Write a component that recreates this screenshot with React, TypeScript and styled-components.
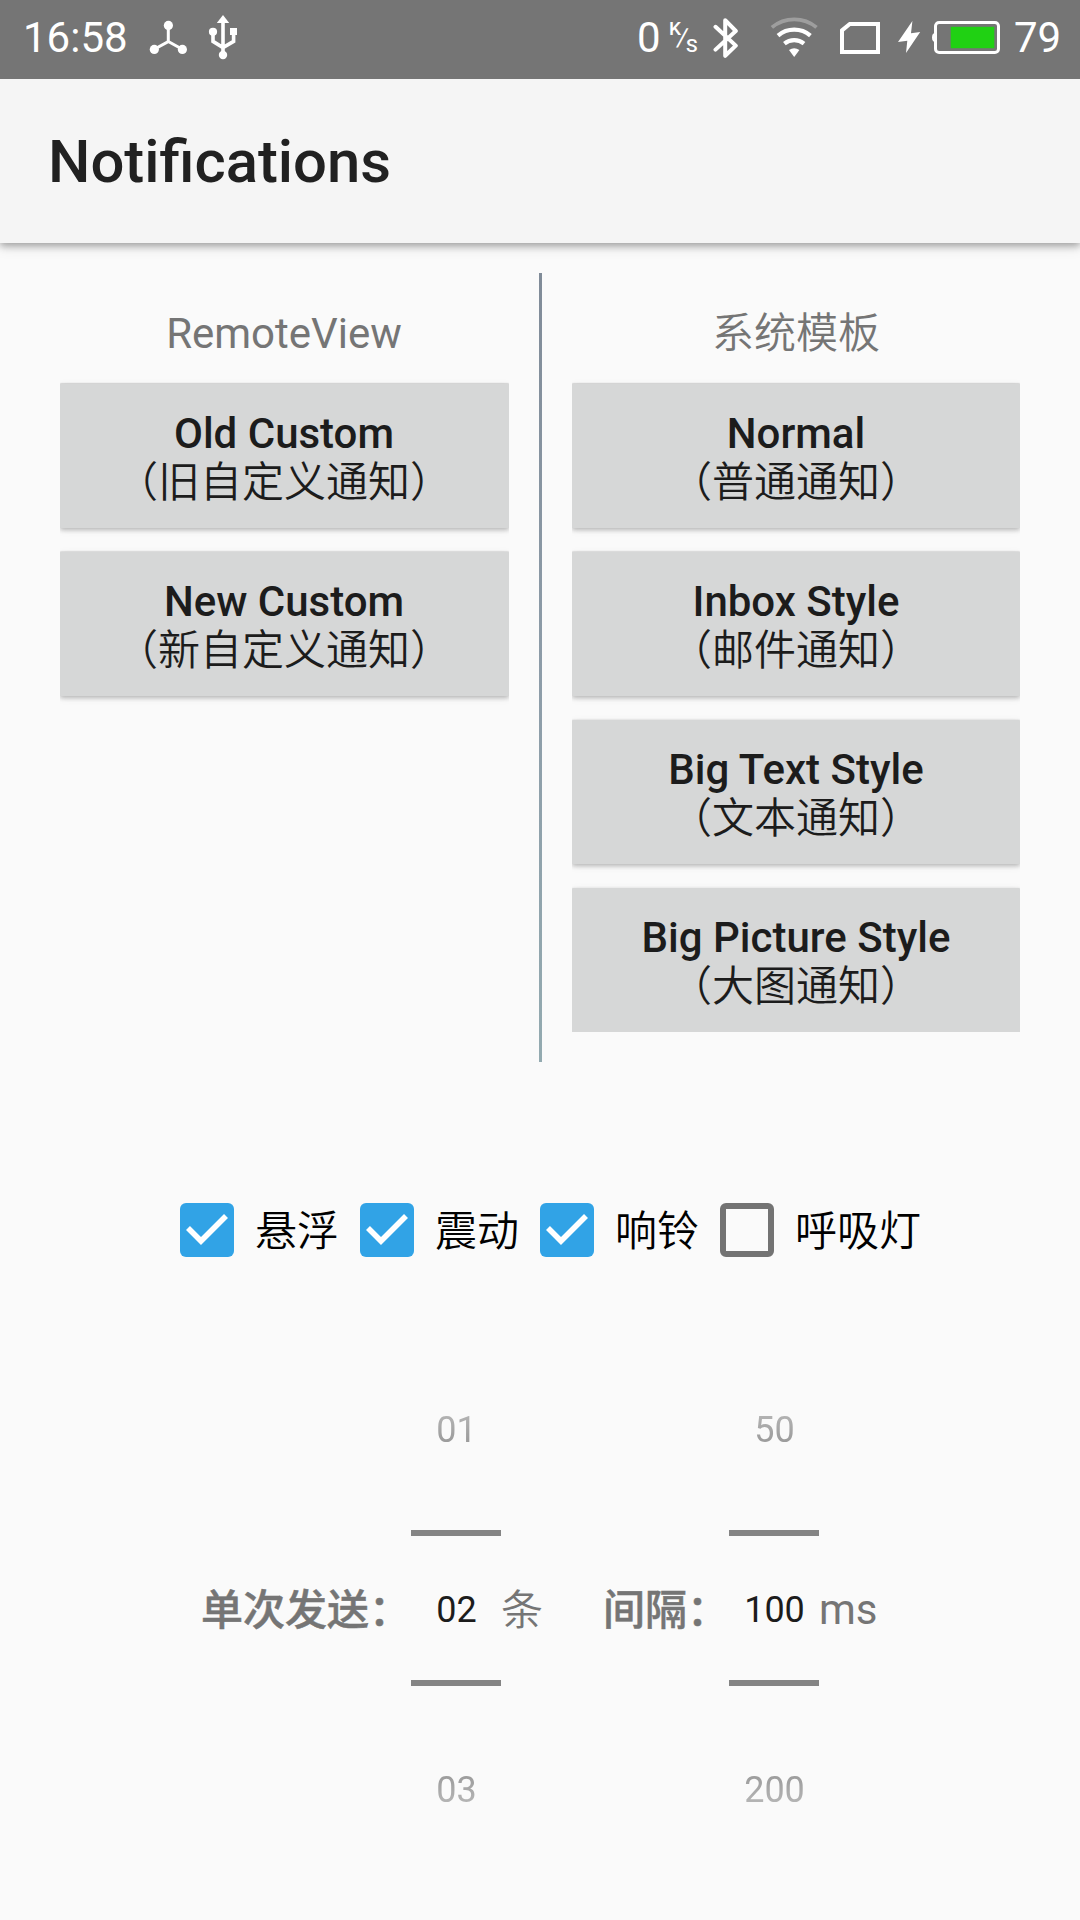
import React, { useState } from "react";
import styled, { createGlobalStyle, css } from "styled-components";

const GlobalStyle = createGlobalStyle`
  * { box-sizing: border-box; }
  html, body { margin: 0; padding: 0; background: #fafafa; }
  body { font-family: Roboto, "Noto Sans CJK SC", sans-serif; }
`;

const cjkDemiLight = css`
  font-family: Roboto, "Noto Sans CJK SC DemiLight", "Noto Sans CJK SC", sans-serif;
  font-weight: 350;
`;

const Screen = styled.div`
  width: 1080px;
  height: 1920px;
  display: flex;
  flex-direction: column;
  background: #fafafa;
  overflow: hidden;
`;

const StatusBar = styled.header`
  flex: none;
  height: 79px;
  display: flex;
  align-items: flex-start;
  padding-left: 23px;
  background: #757575;
  color: #fff;
`;

const StatusText = styled.span<{ $width: number; $before?: number }>`
  flex: none;
  width: ${(p) => p.$width}px;
  margin-left: ${(p) => p.$before ?? 0}px;
  font-size: 42px;
  font-weight: 400;
  line-height: 48px;
  padding-top: 14px;
  white-space: nowrap;
`;

const Spacer = styled.div`
  flex: 1;
`;

const Glyph = styled.svg<{ $before: number }>`
  flex: none;
  display: block;
  margin-left: ${(p) => p.$before}px;
`;

const RateUnit = styled.span`
  flex: none;
  width: 34px;
  height: 79px;
  margin-left: 4px;
  display: flex;
  font-weight: 500;
  line-height: 22px;
`;

const UnitPart = styled.span<{ $top: number; $width: number }>`
  width: ${(p) => p.$width}px;
  padding-top: ${(p) => p.$top}px;
  font-size: 19px;
`;

const UnitSlash = styled.span`
  width: 9px;
  padding-top: 27px;
  font-size: 25px;
  font-weight: 400;
  transform: skewX(-9deg);
`;

const AppBar = styled.div`
  flex: none;
  height: 164px;
  display: flex;
  align-items: center;
  padding: 2px 48px 0;
  background: #f5f5f5;
  box-shadow: 0 3px 7px rgba(0, 0, 0, 0.3), 0 6px 12px rgba(0, 0, 0, 0.08);
  clip-path: inset(0 0 -30px 0);
`;

const Title = styled.h1`
  margin: 0;
  font-size: 59.8px;
  font-weight: 500;
  line-height: 70px;
  color: #212121;
`;

const Columns = styled.main`
  flex: none;
  margin-top: 30px;
  height: 789px;
  display: flex;
  padding: 0 60px;
`;

const Column = styled.section<{ $width: number }>`
  width: ${(p) => p.$width}px;
  display: flex;
  flex-direction: column;
`;

const Divider = styled.div`
  width: 3px;
  margin: 0 30px;
  background: linear-gradient(#808b98, #8d9ca8 50%, #93aab0);
`;

const ColumnTitle = styled.h2<{ $inset?: number }>`
  margin: 0;
  height: 99px;
  padding: 36px ${(p) => p.$inset ?? 0}px 0 0;
  font-size: 42px;
  font-weight: 400;
  line-height: 50px;
  text-align: center;
  color: #757575;
`;

const CjkTitle = styled.span`
  ${cjkDemiLight}
`;

const ButtonStack = styled.div`
  display: flex;
  flex-direction: column;
  gap: 24px;
  padding-top: 12px;
  overflow: hidden;
`;

const StackEnd = styled.div`
  height: 0;
`;

const ActionButton = styled.button<{ $inset: number; $rim: number }>`
  flex: none;
  height: 144px;
  display: flex;
  flex-direction: column;
  align-items: center;
  padding: 26px ${(p) => p.$inset}px 0 0;
  border: 0;
  border-radius: 1px;
  background: #d6d7d7;
  color: #1c1c1c;
  font-family: inherit;
  font-size: 42px;
  box-shadow: 0 -1px 1px rgba(0, 0, 0, ${(p) => p.$rim}), 0 2px 4px rgba(0, 0, 0, 0.22),
    0 2px 8px rgba(0, 0, 0, 0.08);
`;

const ActionName = styled.span`
  font-weight: 500;
  line-height: 48px;
  white-space: nowrap;
`;

const ActionNote = styled.span`
  ${cjkDemiLight}
  line-height: 50px;
  white-space: nowrap;
`;

const Options = styled.div`
  flex: none;
  height: 96px;
  margin-top: 120px;
  display: flex;
  justify-content: center;
`;

const Option = styled.label`
  display: flex;
  align-items: center;
  font-size: 42px;
  line-height: 60px;
  color: #000;
  white-space: nowrap;
`;

const OptionName = styled.span`
  ${cjkDemiLight}
  padding-top: 4px;
`;

const CheckButton = styled.button<{ $on: boolean }>`
  width: 54px;
  height: 54px;
  margin: 0 21px;
  padding: 0;
  border-radius: 6px;
  ${(p) =>
    p.$on
      ? css`
          border: 0;
          background: #31a3e6;
        `
      : css`
          border: 6px solid #737373;
          background: transparent;
        `}
`;

const CheckMark = styled.svg`
  display: block;
`;

const Pickers = styled.div`
  flex: none;
  height: 540px;
  margin-top: 60px;
  display: flex;
  justify-content: center;
  align-items: center;
  gap: 60px;
`;

const PickerGroup = styled.div`
  display: flex;
  align-items: center;
  height: 540px;
  color: #757575;
  font-size: 42px;
  line-height: 60px;
  white-space: nowrap;
`;

const PickerLabel = styled.span`
  padding-top: 5px;
  font-family: Roboto, "Noto Sans CJK SC Medium", "Noto Sans CJK SC", sans-serif;
  font-weight: 500;
  -webkit-text-stroke: 0.5px #757575;
`;

const PickerUnit = styled.span<{ $width: number; $cjk?: boolean }>`
  width: ${(p) => p.$width}px;
  padding-top: ${(p) => (p.$cjk ? 5 : 4)}px;
  ${(p) => p.$cjk && cjkDemiLight}
`;

const Wheel = styled.div`
  width: 90px;
  height: 540px;
  display: flex;
  flex-direction: column;
  align-items: center;
  font-size: 36px;
  line-height: 42px;
`;

const WheelSide = styled.div<{ $edge: "top" | "bottom" }>`
  height: 192px;
  padding: ${(p) => (p.$edge === "top" ? 71 : 83)}px 0 0 1px;
  color: #757575;
  mask-image: linear-gradient(
    to ${(p) => (p.$edge === "top" ? "bottom" : "top")},
    transparent,
    #000 145px
  );
`;

const WheelRule = styled.div`
  width: 90px;
  height: 6px;
  background: #848484;
`;

const WheelValue = styled.div`
  height: 144px;
  padding: 53px 0 0 1px;
  color: #1c1c1c;
`;

function TetherIcon() {
  return (
    <Glyph $before={10} width="40" height="79" viewBox="149 0 40 79" fill="#fff">
      <path d="M168.3 26V41.5L154.3 49.3M168.3 41.5L182.3 49.3" fill="none" stroke="#fff" strokeWidth="3" />
      <circle cx="168.4" cy="25.4" r="4.6" />
      <circle cx="154.3" cy="49.4" r="4.6" />
      <circle cx="182.4" cy="49.4" r="4.6" />
    </Glyph>
  );
}

function UsbIcon() {
  return (
    <Glyph $before={19} width="30" height="79" viewBox="208 0 30 79" fill="#fff">
      <path d="M223 15L229.2 23H216.8Z" />
      <path d="M223 21V54M213 32V41.4L223 47.6L233.6 41.4V32" fill="none" stroke="#fff" strokeWidth="3.6" />
      <circle cx="213" cy="31.8" r="4.1" />
      <rect x="230" y="28" width="7" height="7" />
      <circle cx="223" cy="55" r="4.2" />
    </Glyph>
  );
}

function BluetoothIcon() {
  return (
    <Glyph $before={10} width="26" height="79" viewBox="713 0 26 79">
      <path
        d="M715.5 26.8L735.8 45.6L725.2 55.8V20.2L735.8 31L715.5 49.6"
        fill="none"
        stroke="#fff"
        strokeWidth="4"
        strokeLinecap="round"
        strokeLinejoin="round"
      />
    </Glyph>
  );
}

function WifiIcon() {
  return (
    <Glyph $before={31} width="48" height="79" viewBox="770 0 48 79" fill="none" stroke="#fff">
      <path d="M771.9 27.4A35 35 0 0 1 816.5 27.4" strokeWidth="3.8" opacity="0.3" />
      <path d="M778 35.6A25 25 0 0 1 810.4 35.6" strokeWidth="4.2" />
      <path d="M784.4 43.6A15.5 15.5 0 0 1 804 43.6" strokeWidth="4.2" />
      <path d="M789 50Q794.2 46.4 799.4 50L794.2 57Z" fill="#fff" stroke="none" />
    </Glyph>
  );
}

function SimIcon() {
  return (
    <Glyph $before={22} width="40" height="79" viewBox="840 0 40 79">
      <path d="M842 30.4L849.8 24H878V52H842Z" fill="none" stroke="#fff" strokeWidth="4" />
    </Glyph>
  );
}

function BoltIcon() {
  return (
    <Glyph $before={17} width="24" height="79" viewBox="897 0 24 79">
      <path d="M912.4 21L898 42L907.3 40.8L906 53L920.2 32L911 33.2Z" fill="#fff" />
    </Glyph>
  );
}

function BatteryIcon() {
  return (
    <Glyph $before={11} width="68" height="79" viewBox="932 0 68 79">
      <path d="M934.5 33.6H933.4Q932 34.4 932 37.5T933.4 41.4H934.5Z" fill="#fff" />
      <rect x="935.5" y="22.5" width="63" height="30" rx="3.6" fill="none" stroke="#fff" strokeWidth="3" />
      <rect x="950.7" y="26.8" width="43.6" height="21.4" fill="#20d113" />
    </Glyph>
  );
}

type Action = { name: string; note: string };

const remoteActions: Action[] = [
  { name: "Old Custom", note: "（旧自定义通知）" },
  { name: "New Custom", note: "（新自定义通知）" },
];

const templateActions: Action[] = [
  { name: "Normal", note: "（普通通知）" },
  { name: "Inbox Style", note: "（邮件通知）" },
  { name: "Big Text Style", note: "（文本通知）" },
  { name: "Big Picture Style", note: "（大图通知）" },
];

const rimByRow = [0.12, 0.09, 0.03, 0.01];

function Actions({ items, inset = 0 }: { items: Action[]; inset?: number }) {
  return (
    <>
      {items.map((a, row) => (
        <ActionButton key={a.name} type="button" $inset={inset} $rim={rimByRow[row]}>
          <ActionName>{a.name}</ActionName>
          <ActionNote>{a.note}</ActionNote>
        </ActionButton>
      ))}
    </>
  );
}

function NumberWheel({ values }: { values: [string, string, string] }) {
  return (
    <Wheel>
      <WheelSide $edge="top">{values[0]}</WheelSide>
      <WheelRule />
      <WheelValue>{values[1]}</WheelValue>
      <WheelRule />
      <WheelSide $edge="bottom">{values[2]}</WheelSide>
    </Wheel>
  );
}

const optionNames = ["悬浮", "震动", "响铃", "呼吸灯"];

export default function App() {
  const [checked, setChecked] = useState([true, true, true, false]);
  const toggle = (i: number) => setChecked((prev) => prev.map((v, n) => (n === i ? !v : v)));

  return (
    <>
      <GlobalStyle />
      <Screen>
        <StatusBar>
          <StatusText $width={116}>16:58</StatusText>
          <TetherIcon />
          <UsbIcon />
          <Spacer />
          <StatusText $width={28}>0</StatusText>
          <RateUnit>
            <UnitPart $top={18} $width={8}>K</UnitPart>
            <UnitSlash>/</UnitSlash>
            <UnitPart $top={35} $width={12}>S</UnitPart>
          </RateUnit>
          <BluetoothIcon />
          <WifiIcon />
          <SimIcon />
          <BoltIcon />
          <BatteryIcon />
          <StatusText $width={66} $before={14}>79</StatusText>
        </StatusBar>
        <AppBar>
          <Title>Notifications</Title>
        </AppBar>
        <Columns>
          <Column $width={449}>
            <ColumnTitle $inset={1}>RemoteView</ColumnTitle>
            <ButtonStack>
              <Actions items={remoteActions} inset={1} />
              <StackEnd />
            </ButtonStack>
          </Column>
          <Divider />
          <Column $width={448}>
            <ColumnTitle>
              <CjkTitle>系统模板</CjkTitle>
            </ColumnTitle>
            <ButtonStack>
              <Actions items={templateActions} />
            </ButtonStack>
          </Column>
        </Columns>
        <Options>
          {optionNames.map((name, i) => (
            <Option key={name}>
              <CheckButton type="button" $on={checked[i]} onClick={() => toggle(i)}>
                {checked[i] && (
                  <CheckMark width="54" height="54" viewBox="0 0 54 54">
                    <path d="M8 25L21 38L46 13" fill="none" stroke="#fff" strokeWidth="5.6" />
                  </CheckMark>
                )}
              </CheckButton>
              <OptionName>{name}</OptionName>
            </Option>
          ))}
        </Options>
        <Pickers>
          <PickerGroup>
            <PickerLabel>单次发送：</PickerLabel>
            <NumberWheel values={["01", "02", "03"]} />
            <PickerUnit $width={42} $cjk>条</PickerUnit>
          </PickerGroup>
          <PickerGroup>
            <PickerLabel>间隔：</PickerLabel>
            <NumberWheel values={["50", "100", "200"]} />
            <PickerUnit $width={60}>ms</PickerUnit>
          </PickerGroup>
        </Pickers>
      </Screen>
    </>
  );
}
